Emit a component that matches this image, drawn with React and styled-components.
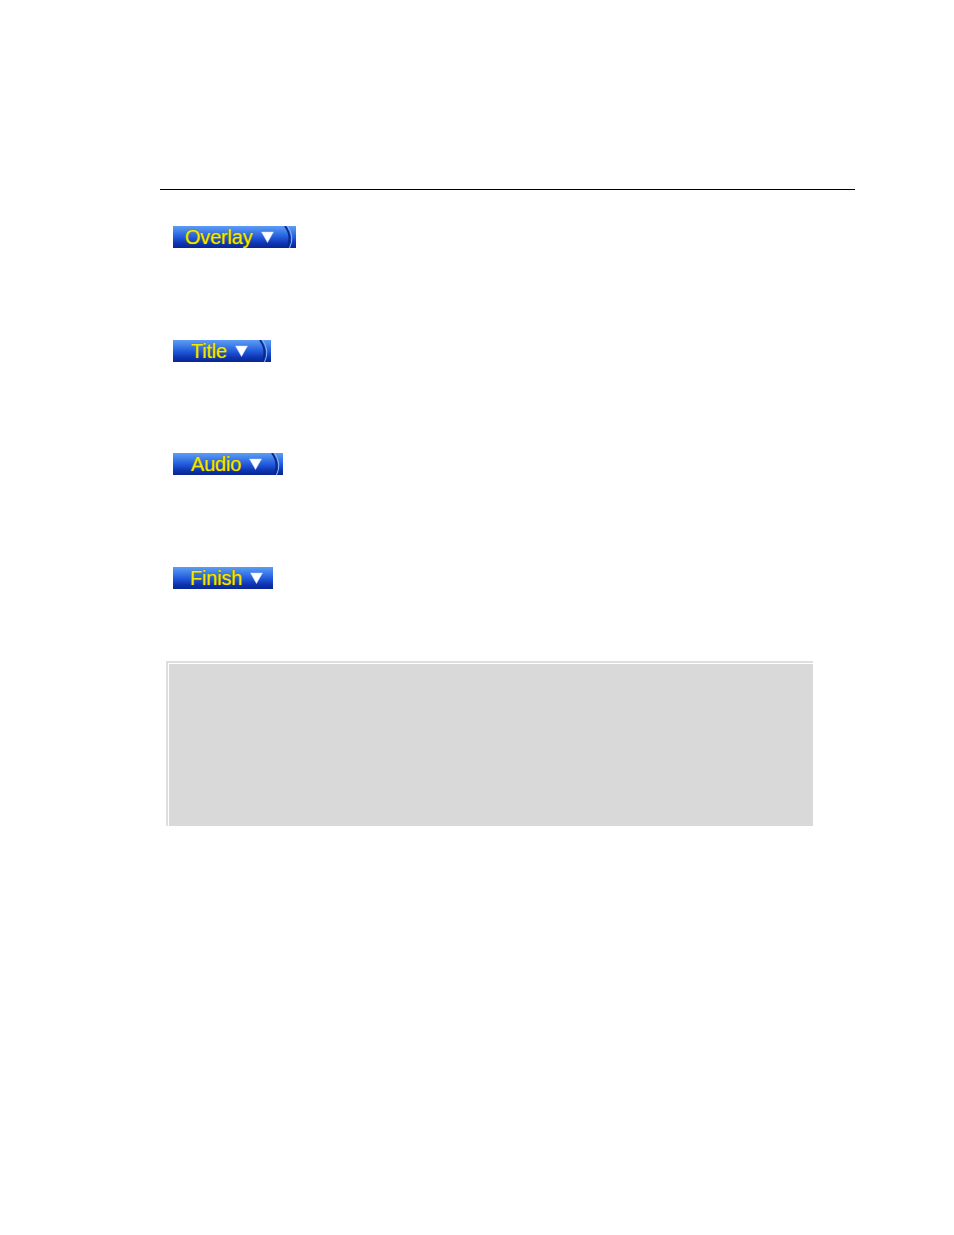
import styled, { createGlobalStyle } from "styled-components";

const Global = createGlobalStyle`
  html, body {
    margin: 0;
    background: #ffffff;
    font-family: "Liberation Sans", Arial, sans-serif;
  }
`;

const Page = styled.div`
  width: 954px;
  height: 1235px;
  padding-top: 189px;
  box-sizing: border-box;
`;

const Rule = styled.div`
  margin-left: 160px;
  width: 695px;
  height: 1px;
  background: #000;
`;

const List = styled.div`
  display: flex;
  flex-direction: column;
  align-items: flex-start;
  gap: 91.5px;
  padding: 36px 0 0 173px;
`;

const Tab = styled.div`
  position: relative;
  display: flex;
  align-items: center;
  height: 22px;
  width: ${(p) => p.w}px;
  padding-left: ${(p) => p.pad}px;
  box-sizing: border-box;
  background: linear-gradient(
    to bottom,
    #5f9cf4 0%,
    #3f7fea 25%,
    #1f55d8 55%,
    #0d34b0 80%,
    #0a2690 100%
  );
  overflow: hidden;
`;

const Label = styled.span`
  color: #f4e800;
  font-size: 20px;
  line-height: 22px;
  letter-spacing: -0.2px;
  text-shadow: 0 0 1px #8a8200, 0 0 1px #8a8200;
`;

const Arrow = styled.svg`
  margin-left: 8px;
  width: 13px;
  height: 12px;
`;

const Curve = styled.svg`
  position: absolute;
  right: 0;
  top: 0;
  width: 12px;
  height: 22px;
`;

const Panel = styled.div`
  margin: 72px 0 0 166px;
  width: 647px;
  height: 165px;
  border: 2px solid #dedede;
  border-right: none;
  border-bottom: none;
  box-sizing: border-box;
  background: #d9d9d9;
  box-shadow: inset 1px 1px 0 #fff;
`;

const tabs = [
  { text: "Overlay", w: 123, pad: 12, curve: true },
  { text: "Title", w: 98, pad: 18, curve: true },
  { text: "Audio", w: 110, pad: 18, curve: true },
  { text: "Finish", w: 100, pad: 17, curve: false },
];

const App = () => (
  <>
    <Global />
    <Page>
      <Rule />
      <List>
        {tabs.map((t) => (
          <Tab key={t.text} w={t.w} pad={t.pad}>
            <Label>{t.text}</Label>
            <Arrow viewBox="0 0 13 12">
              <path d="M0.5 1 L12.5 1 L6.5 11.5 Z" fill="#fff" stroke="#c8d8ff" strokeWidth="0.5" />
            </Arrow>
            {t.curve && (
              <Curve viewBox="0 0 12 22">
                <path d="M1 0 Q9 11 3 22" fill="none" stroke="#0a2a8a" strokeWidth="2" />
                <path d="M3.5 0 Q11 11 5.5 22" fill="none" stroke="#8fb8ff" strokeWidth="1" />
              </Curve>
            )}
          </Tab>
        ))}
      </List>
      <Panel />
    </Page>
  </>
);

export default App;
